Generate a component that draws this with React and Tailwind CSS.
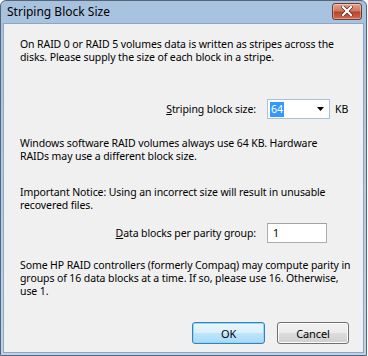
export default function App() {
  const font = { fontFamily: '"Noto Sans", "Open Sans", sans-serif' }

  return (
    <div className="w-[368px] h-[356px] bg-white">
      <div
        className="w-[367px] h-[356px] flex flex-col border border-[#56657a] bg-[linear-gradient(#a7c2df,#bcd3eb)] rounded-t-[6px] overflow-hidden"
        style={font}
      >
        {/* Title bar */}
        <div className="h-[22px] flex items-center justify-between pl-[6px] pr-[4px]">
          <span className="text-[12px] text-black leading-none">Striping Block Size</span>
          <button className="w-[30px] h-[17px] mt-[-2px] rounded-[3px] border border-[#6e3a33] bg-[linear-gradient(#e8a493,#d0785f_45%,#b8452a_55%,#cf6d52)] flex items-center justify-center shadow-[inset_0_0_0_1px_rgba(255,255,255,0.35)]">
            <svg width="12" height="10" viewBox="0 0 12 10">
              <path d="M2 1 L10 9 M10 1 L2 9" stroke="#4a2820" strokeWidth="3.6" strokeLinecap="square" />
              <path d="M2 1 L10 9 M10 1 L2 9" stroke="#ffffff" strokeWidth="2.2" strokeLinecap="square" />
            </svg>
          </button>
        </div>

        {/* Client area */}
        <div className="flex-1 mx-[2px] mb-[2px] bg-[#f0f0f0] border border-[#8ea6c2] text-[10.5px] tracking-[-0.1px] leading-[13px] text-black pl-[16px] pr-[14px] pt-[14px] flex flex-col whitespace-nowrap">
          <p>
            On RAID 0 or RAID 5 volumes data is written as stripes across the<br />
            disks. Please supply the size of each block in a stripe.
          </p>

          <div className="mt-[35px] flex items-center h-[20px]">
            <span className="w-[236px] text-right">
              <span className="underline">S</span>triping block size:
            </span>
            <div className="ml-[11px] w-[63px] h-[20px] bg-white border border-[#a8c0d8] flex items-center pl-[2px] pr-[5px]">
              <span className="bg-[#3399ff] text-white px-[1px] leading-[15px]">64</span>
              <span className="flex-1" />
              <svg width="7" height="4" viewBox="0 0 7 4">
                <path d="M0 0 H7 L3.5 4 Z" fill="#000" />
              </svg>
            </div>
            <span className="ml-[5px]">KB</span>
          </div>

          <p className="mt-[18px]">
            Windows software RAID volumes always use 64 KB. Hardware<br />
            RAIDs may use a different block size.
          </p>

          <p className="mt-[23px]">
            Important Notice: Using an incorrect size will result in unusable<br />
            recovered files.
          </p>

          <div className="mt-[11px] flex items-center h-[20px]">
            <span className="w-[236px] text-right">
              <span className="underline">D</span>ata blocks per parity group:
            </span>
            <div className="ml-[11px] w-[60px] h-[20px] bg-white border border-[#abadb3] border-t-[#a0a3aa] flex items-center pl-[5px]">
              1
            </div>
          </div>

          <p className="mt-[16px]">
            Some HP RAID controllers (formerly Compaq) may compute parity in<br />
            groups of 16 data blocks at a time. If so, please use 16. Otherwise,<br />
            use 1.
          </p>

          <div className="mt-[24px] flex justify-end gap-[12px]">
            <button className="w-[73px] h-[22px] rounded-[3px] border border-[#3c7fb1] bg-[linear-gradient(#eaf6fd,#d9f0fc_50%,#bee6fd_50%,#a7d9f5)] text-[11px] shadow-[inset_0_0_0_1px_#8fd8f8]">
              OK
            </button>
            <button className="w-[72px] h-[22px] rounded-[3px] border border-[#707070] bg-[linear-gradient(#f2f2f2,#ebebeb_50%,#dddddd_50%,#cfcfcf)] text-[11px] shadow-[inset_0_0_0_1px_#fcfcfc]">
              Cancel
            </button>
          </div>
        </div>
      </div>
    </div>
  )
}
